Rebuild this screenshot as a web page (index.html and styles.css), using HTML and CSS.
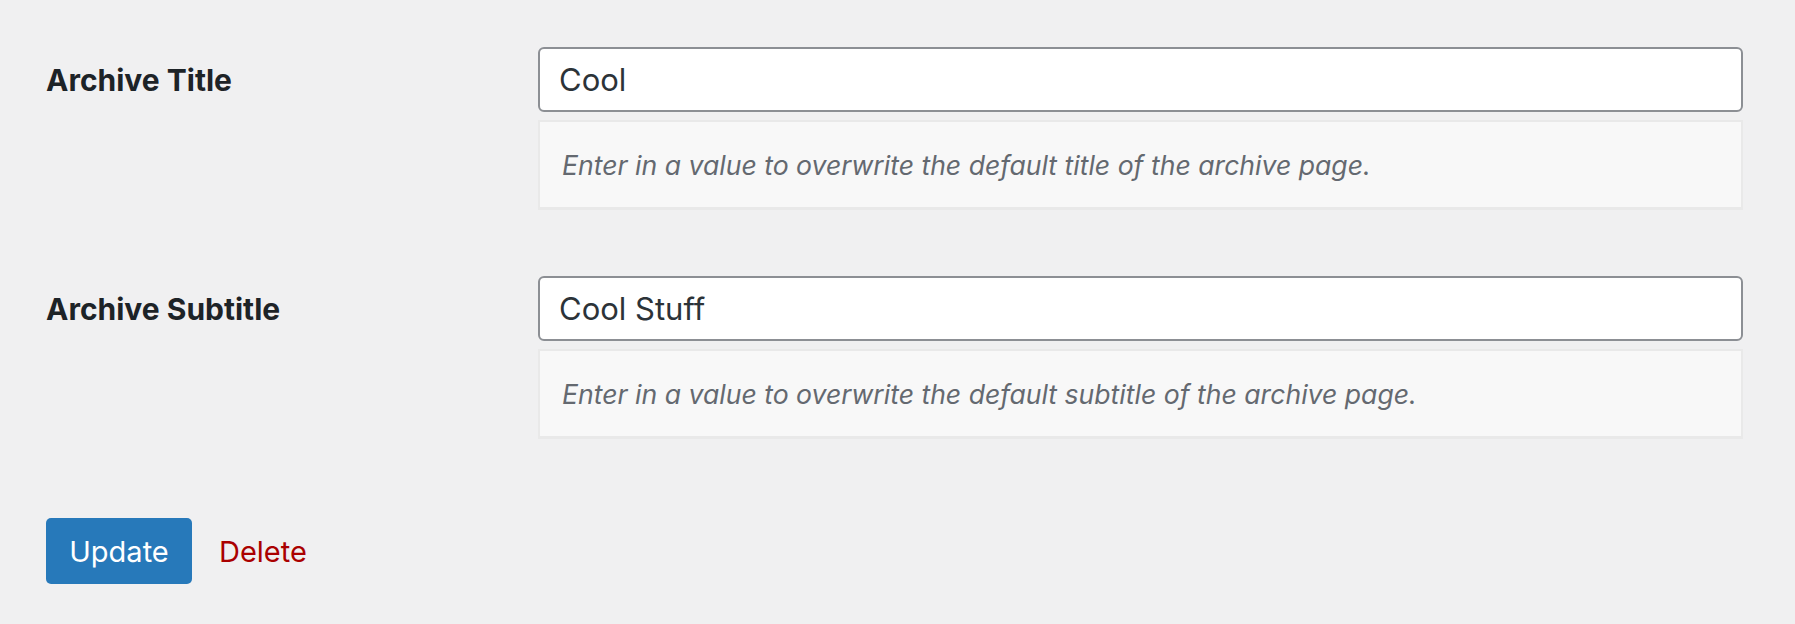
FILE: index.html
```html
<!DOCTYPE html>
<html>
<head>
<meta charset="utf-8">
<link rel="stylesheet" href="styles.css">
</head>
<body>
<form class="settings">
  <div class="field">
    <label class="field-label" for="t1">Archive Title</label>
    <div class="field-body">
      <input id="t1" class="text-input" type="text" value="Cool">
      <p class="help">Enter in a value to overwrite the default title of the archive page.</p>
    </div>
  </div>
  <div class="field">
    <label class="field-label" for="t2">Archive Subtitle</label>
    <div class="field-body">
      <input id="t2" class="text-input" type="text" value="Cool Stuff">
      <p class="help">Enter in a value to overwrite the default subtitle of the archive page.</p>
    </div>
  </div>
  <div class="actions">
    <button type="button" class="btn-primary">Update</button>
    <a class="delete-link" href="#">Delete</a>
  </div>
</form>
</body>
</html>
```
FILE: styles.css
```css
html, body {
  margin: 0;
  padding: 0;
  background: #f0f0f1;
  font-family: Inter, "Noto Sans", "Liberation Sans", sans-serif;
  color: #1d2327;
}
.settings {
  display: flex;
  flex-direction: column;
  gap: 66px;
  padding: 47px 52px 0 46px;
}
.field {
  display: grid;
  grid-template-columns: 492px 1fr;
}
.field-label {
  font-weight: 700;
  font-size: 30px;
  height: 65px;
  display: flex;
  align-items: center;
  color: #1d2327;
}
.field-body {
  display: flex;
  flex-direction: column;
  gap: 8px;
}
.text-input {
  box-sizing: border-box;
  height: 65px;
  width: 100%;
  margin: 0;
  border: 2px solid #8c8f94;
  border-radius: 6px;
  background: #fff;
  padding: 0 19px;
  font-family: inherit;
  font-size: 31px;
  color: #2c3338;
  outline: none;
}
.help {
  box-sizing: border-box;
  margin: 0;
  height: 90px;
  display: flex;
  align-items: center;
  padding: 0 22px;
  background: #f8f8f8;
  border: 2px solid #e9e9e9;
  border-bottom-width: 3px;
  font-style: italic;
  font-size: 26.6px;
  color: #646970;
}
.actions {
  display: flex;
  align-items: center;
  gap: 27px;
  margin-top: 13px;
}
.btn-primary {
  box-sizing: border-box;
  height: 66px;
  width: 146px;
  border: none;
  border-radius: 5px;
  background: #2779ba;
  color: #fff;
  font-family: inherit;
  font-size: 29px;
  padding: 0;
}
.delete-link {
  color: #a00;
  text-decoration: none;
  font-size: 29px;
}
```
